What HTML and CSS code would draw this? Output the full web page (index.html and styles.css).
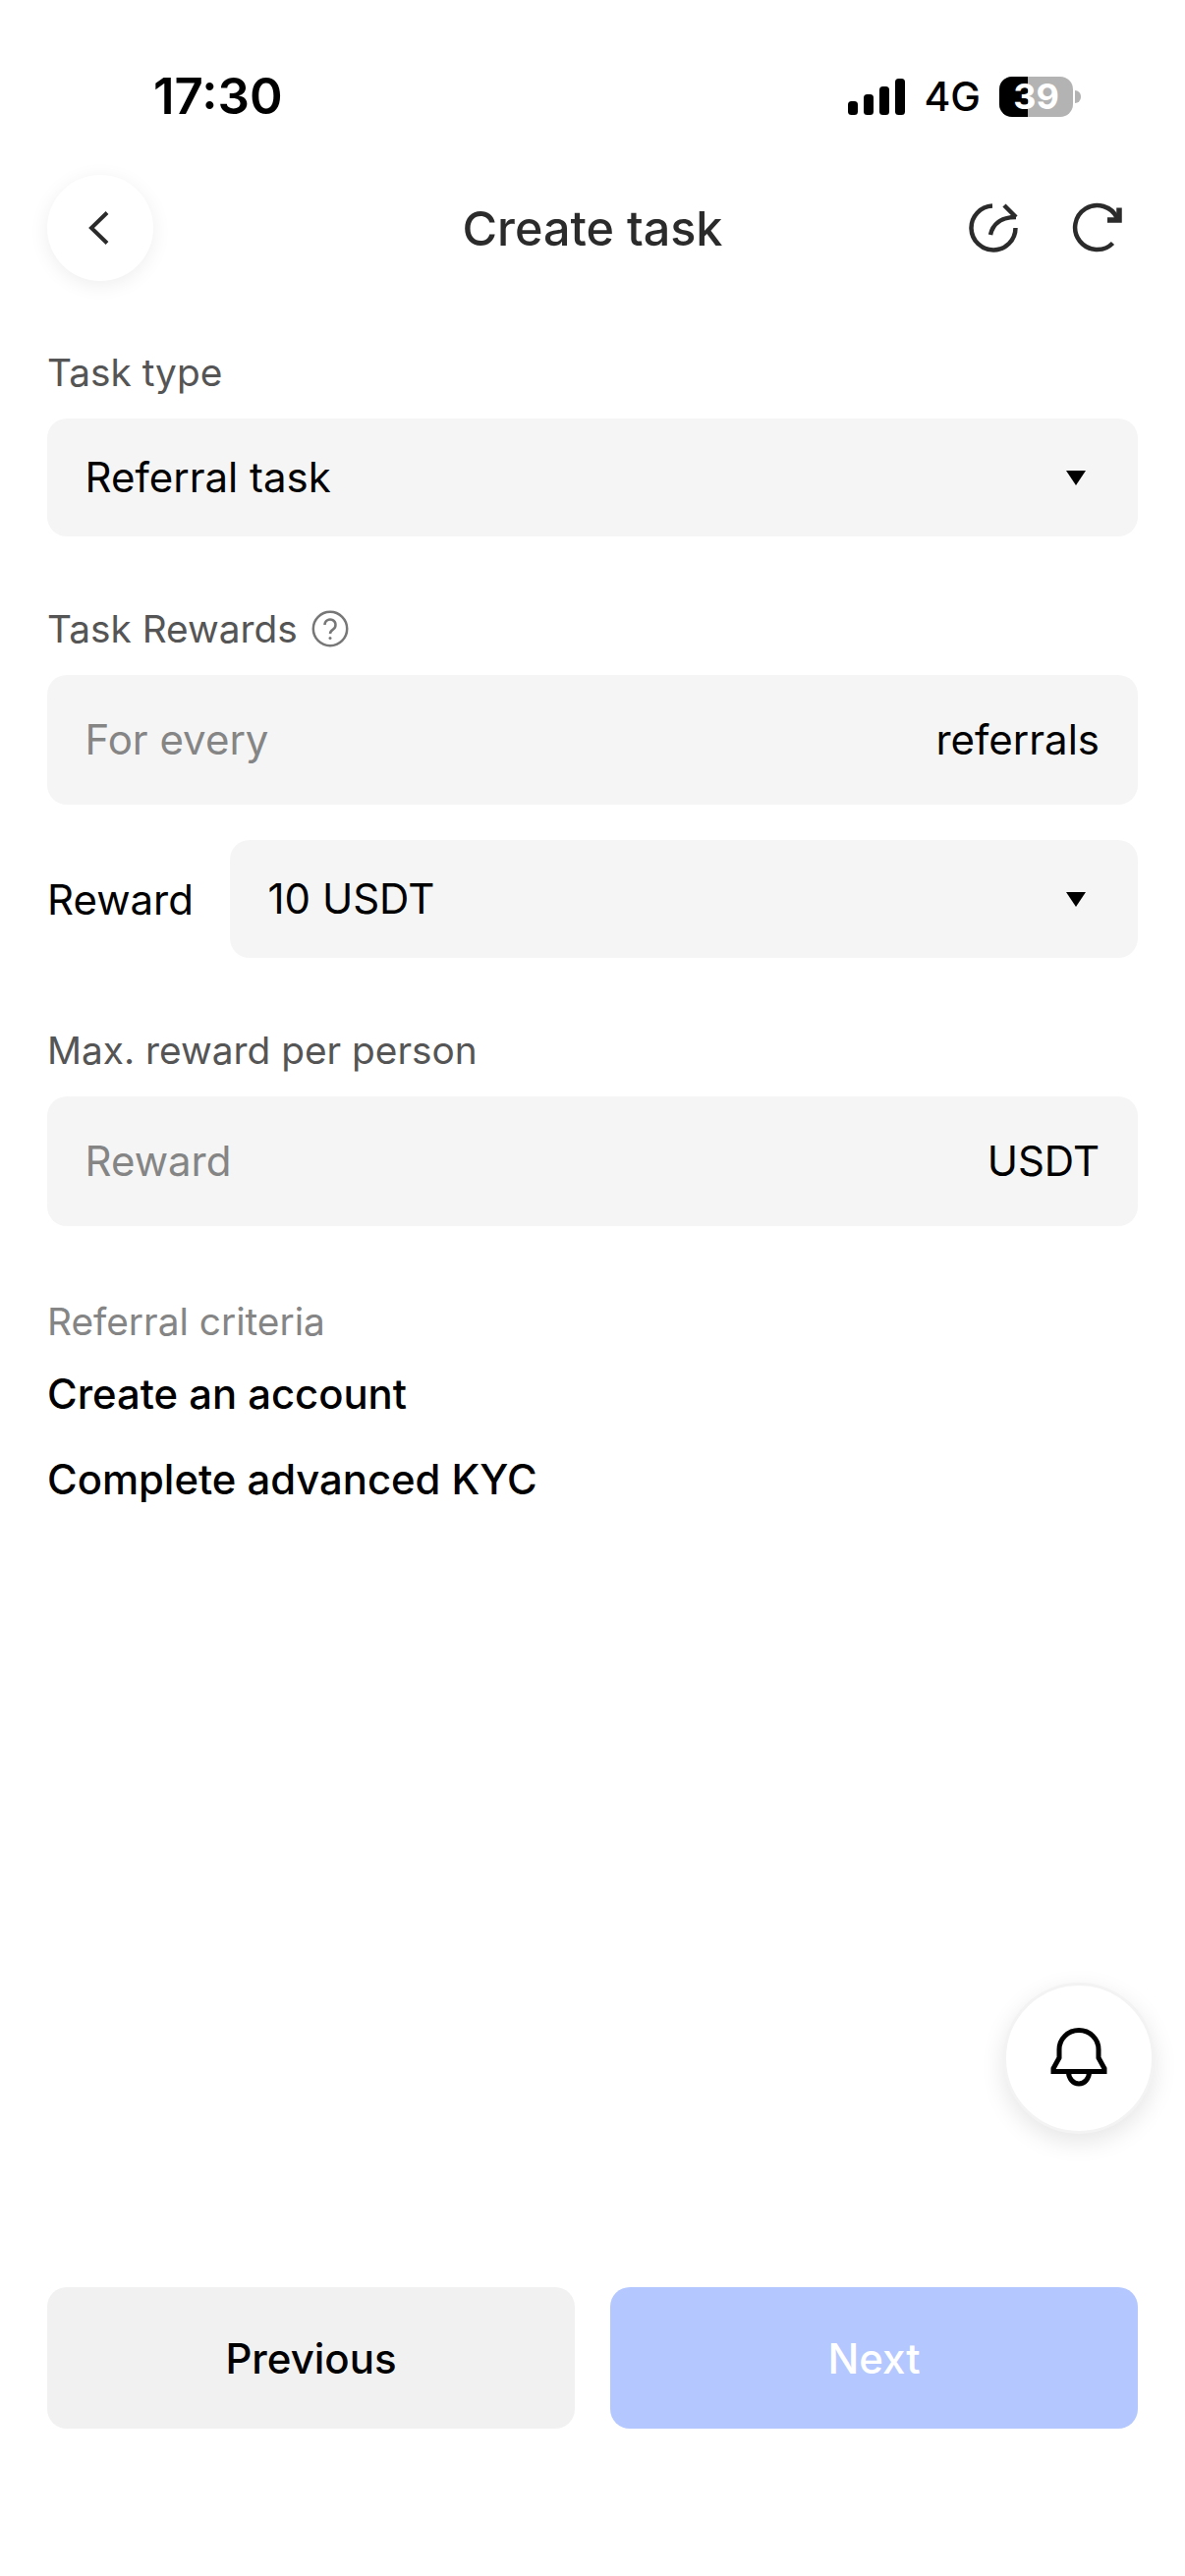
FILE: index.html
```html
<!DOCTYPE html>
<html lang="en">
<head>
  <meta charset="UTF-8"/>
  <meta name="viewport" content="width=device-width, initial-scale=1.0"/>
  <title>Create task</title>
  <link rel="stylesheet" href="styles.css">
</head>
<body>

<div class="status-bar">
  <span class="time">17:30</span>
  <div class="status-right">
    <svg class="signal" width="58" height="37" viewBox="0 0 58 37" fill="#000">
      <rect x="0" y="23" width="10" height="14" rx="3.5"/>
      <rect x="16" y="16" width="10" height="21" rx="3.5"/>
      <rect x="32" y="8" width="10" height="29" rx="3.5"/>
      <rect x="48" y="0" width="10" height="37" rx="3.5"/>
    </svg>
    <span class="network">4G</span>
    <div class="battery">
      <div class="battery-body"><div class="battery-fill"></div><span>39</span></div>
      <div class="battery-tip"></div>
    </div>
  </div>
</div>

<header class="topbar">
  <button class="back">
    <svg width="24" height="36" viewBox="0 0 24 36" fill="none" stroke="#2b2b2b" stroke-width="4">
      <path d="M21 2.500 5 18l16 15.500"/>
    </svg>
  </button>
  <h1>Create task</h1>
  <div class="topbar-icons">
    <svg width="52" height="52" viewBox="0 0 52 52" fill="none" stroke="#2b2b2b" stroke-width="4.500">
      <path d="M24 3.500A22.500 22.500 0 1 0 47.500 26"/>
      <path d="M22 33c2-10 10-18 26-18"/>
      <path d="M36 3l12 12"/>
    </svg>
    <svg width="52" height="52" viewBox="0 0 52 52" fill="none" stroke="#2b2b2b" stroke-width="4.500">
      <path d="M47 16A22.500 22.500 0 1 0 42.500 41.500"/>
      <path d="M49 5.500v12.500H37" stroke-width="5.500"/>
    </svg>
  </div>
</header>

<main class="form">
  <div class="label">Task type</div>
  <div class="field select">
    <span>Referral task</span>
    <span class="caret"></span>
  </div>

  <div class="label label-rewards">Task Rewards
    <svg width="38" height="38" viewBox="0 0 38 38" fill="none" stroke="#777" stroke-width="2.500">
      <circle cx="19" cy="19" r="17.200"/>
      <path d="M13.500 15a5.500 5.500 0 1 1 8.500 4.600c-2 1.300-3 2.200-3 4.400"/>
      <circle cx="19" cy="28.500" r="1.500" fill="#777" stroke="none"/>
    </svg>
  </div>
  <div class="field input">
    <span class="placeholder">For every</span>
    <span>referrals</span>
  </div>

  <div class="reward-row">
    <span>Reward</span>
    <div class="field select">
      <span>10 USDT</span>
      <span class="caret"></span>
    </div>
  </div>

  <div class="label label-max">Max. reward per person</div>
  <div class="field input">
    <span class="placeholder">Reward</span>
    <span>USDT</span>
  </div>

  <div class="criteria-title">Referral criteria</div>
  <div class="criteria">Create an account</div>
  <div class="criteria">Complete advanced KYC</div>
</main>

<button class="bell">
  <svg width="58" height="62" viewBox="0 0 58 62" fill="none" stroke="#000" stroke-width="5">
    <path d="M3 44.500v-3l6-11V22a20 19.500 0 0 1 40 0v8.500l6 11v3z"/>
    <path d="M18.500 45a10.500 12 0 0 0 21 0"/>
  </svg>
</button>

<footer class="actions">
  <button class="btn btn-prev">Previous</button>
  <button class="btn btn-next">Next</button>
</footer>

</body>
</html>
```

FILE: styles.css
```css
* {
  box-sizing: border-box;
}
html, body {
  height: 2622px;
}
body {
  margin: 0;
  padding: 0;
  background: #fff;
  color: #000;
  font-family: Inter, "Noto Sans", sans-serif;
  display: flex;
  flex-direction: column;
  position: relative;
  overflow: hidden;
}
.status-bar {
  height: 178px;
  padding: 68px 106px 0 156px;
  display: flex;
  justify-content: space-between;
  align-items: flex-start;
}
.time {
  font-size: 51px;
  font-weight: 600;
  line-height: 60px;
}
.status-right {
  display: flex;
  align-items: center;
  height: 60px;
}
.signal {
  margin-right: 19px;
}
.network {
  font-size: 41px;
  font-weight: 500;
  line-height: 60px;
  margin-right: 19px;
}
.battery {
  display: flex;
  align-items: center;
}
.battery-body {
  position: relative;
  width: 75px;
  height: 41px;
  background: #b3b3b3;
  border-radius: 13px;
  overflow: hidden;
  display: flex;
  align-items: center;
  justify-content: center;
}
.battery-fill {
  position: absolute;
  left: 0;
  top: 0;
  bottom: 0;
  width: 29px;
  background: #000;
}
.battery-body span {
  position: relative;
  color: #fff;
  font-size: 36px;
  font-weight: 700;
}
.battery-tip {
  width: 6px;
  height: 13px;
  margin-left: 2px;
  background: #b3b3b3;
  border-radius: 0 6px 6px 0;
}
.topbar {
  height: 108px;
  padding: 0 64px 0 48px;
  display: flex;
  align-items: center;
  position: relative;
}
.back {
  width: 108px;
  height: 108px;
  border: none;
  border-radius: 50%;
  background: #fff;
  box-shadow: 0 4px 20px rgba(0, 0, 0, 0.07);
  display: flex;
  align-items: center;
  justify-content: center;
  padding: 0 4px 0 0;
}
.topbar h1 {
  margin: 0;
  position: absolute;
  left: 0;
  right: 0;
  text-align: center;
  font-size: 48.500px;
  font-weight: 500;
  color: #2b2b2b;
  pointer-events: none;
}
.topbar-icons {
  margin-left: auto;
  display: flex;
  gap: 52px;
}
.form {
  padding: 70px 48px 0;
  font-size: 42px;
}
.label {
  font-size: 38.800px;
  line-height: 46px;
  color: #555;
  margin-bottom: 24px;
}
.label-rewards {
  display: flex;
  align-items: center;
  gap: 14px;
}
.label-max {
  margin-top: 71px;
}
.field {
  display: flex;
  align-items: center;
  justify-content: space-between;
  background: #f5f5f5;
  border-radius: 20px;
  padding: 0 39px 0 38.500px;
  line-height: 50px;
}
.select {
  height: 120px;
  padding-right: 53px;
}
.form > .select {
  margin-bottom: 71px;
}
.input {
  height: 132px;
}
.placeholder {
  color: #858585;
}
.caret {
  width: 0;
  height: 0;
  border-left: 10px solid transparent;
  border-right: 10px solid transparent;
  border-top: 15px solid #000;
}
.reward-row {
  display: flex;
  align-items: center;
  margin-top: 36px;
}
.reward-row > span {
  width: 186px;
}
.reward-row .field {
  flex: 1;
}
.criteria-title {
  margin-top: 74px;
  font-size: 38.800px;
  line-height: 46px;
  color: #858585;
}
.criteria {
  font-weight: 500;
  font-size: 41.800px;
  line-height: 52px;
  margin-top: 35px;
}
.criteria-title + .criteria {
  margin-top: 25px;
}
.bell {
  position: absolute;
  left: 1021px;
  top: 2018px;
  width: 154px;
  height: 154px;
  padding: 0;
  border: 3px solid #f3f3f3;
  border-radius: 50%;
  background: #fff;
  box-shadow: 0 8px 24px rgba(0, 0, 0, 0.1);
  display: flex;
  align-items: center;
  justify-content: center;
}
.actions {
  margin-top: auto;
  margin-bottom: 150px;
  padding: 0 48px;
  display: grid;
  grid-template-columns: 1fr 1fr;
  gap: 36px;
}
.btn {
  height: 144px;
  border: none;
  border-radius: 20px;
  font-family: inherit;
  font-size: 42px;
  font-weight: 500;
}
.btn-prev {
  background: #f1f1f1;
  color: #000;
}
.btn-next {
  background: #b4c8ff;
  color: #fff;
}
```
